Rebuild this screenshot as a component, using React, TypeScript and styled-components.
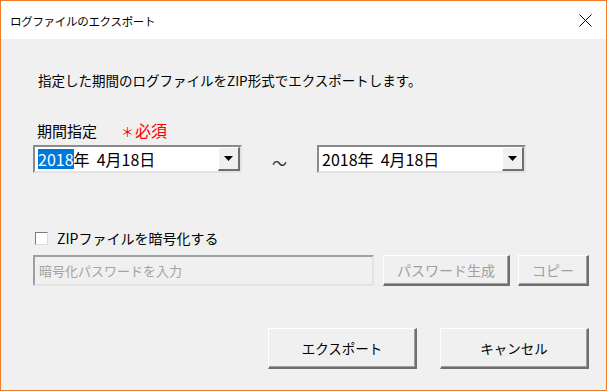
import { FC } from 'react';
import styled, { createGlobalStyle } from 'styled-components';

const GlobalStyle = createGlobalStyle`
  html, body {
    margin: 0;
    padding: 0;
    background: #ffffff;
  }
  body {
    font-family: "Noto Sans CJK JP", "Noto Sans", sans-serif;
    color: #000;
  }
`;

const FONT = `"Noto Sans CJK JP", "Noto Sans", sans-serif`;

type ComboProps = {
  highlight?: boolean;
};

const DateCombo: FC<ComboProps> = ({ highlight = false }) => (
  <SCombo>
    <SComboText>
      {highlight ? <SSelected>2018</SSelected> : '2018'}年&nbsp;&nbsp;4月18日
    </SComboText>
    <SDropButton>
      <svg width="9" height="5" viewBox="0 0 9 5">
        <path d="M0 0 H9 L4.5 5 Z" fill="#000" />
      </svg>
    </SDropButton>
  </SCombo>
);

export default function App() {
  return (
    <>
      <GlobalStyle />
      <SWindow>
        <STitleBar>
          <STitle>ログファイルのエクスポート</STitle>
          <SClose aria-label="close">
            <svg width="13" height="13" viewBox="0 0 13 13">
              <path d="M0.5 0.5 L12.5 12.5 M12.5 0.5 L0.5 12.5" stroke="#000" strokeWidth="1" />
            </svg>
          </SClose>
        </STitleBar>
        <SBody>
          <SDescription>指定した期間のログファイルをZIP形式でエクスポートします。</SDescription>
          <SLabel>
            期間指定
            <SRequired>
              <SAsterisk>＊</SAsterisk>必須
            </SRequired>
          </SLabel>
          <SDateRow>
            <DateCombo highlight />
            <STilde>～</STilde>
            <DateCombo />
          </SDateRow>
          <SCheckRow>
            <SCheckBox />
            <SCheckLabel>ZIPファイルを暗号化する</SCheckLabel>
          </SCheckRow>
          <SPasswordRow>
            <SPasswordInput disabled placeholder="暗号化パスワードを入力" />
            <SButton disabled $width={127}>パスワード生成</SButton>
            <SButton disabled $width={71}>コピー</SButton>
          </SPasswordRow>
          <SFooter>
            <SButton $width={149} $height={41} $size={13.5}>エクスポート</SButton>
            <SButton $width={149} $height={41} $size={13.5}>キャンセル</SButton>
          </SFooter>
        </SBody>
      </SWindow>
    </>
  );
}

const SWindow = styled.div`
  width: 607px;
  height: 391px;
  box-sizing: border-box;
  border: 1px solid #ef7a2a;
  background: #f0f0f0;
  display: flex;
  flex-direction: column;
`;

const STitleBar = styled.div`
  height: 38px;
  background: #ffffff;
  display: flex;
  align-items: center;
  justify-content: space-between;
  padding: 0 14px 0 9px;
  flex-shrink: 0;
`;

const STitle = styled.span`
  font-family: ${FONT};
  font-size: 11.5px;
  line-height: 16px;
  margin-top: 1px;
  letter-spacing: -0.3px;
`;

const SClose = styled.div`
  width: 13px;
  height: 13px;
  display: flex;
  margin-top: 1px;
`;

const SBody = styled.div`
  flex: 1;
  display: flex;
  flex-direction: column;
  padding: 32px 17px 0 32px;
`;

const SDescription = styled.p`
  margin: 0 0 0 5px;
  font-family: ${FONT};
  font-size: 13.5px;
  line-height: 18px;
`;

const SLabel = styled.p`
  margin: 32px 0 0 4px;
  font-family: ${FONT};
  font-size: 15px;
  line-height: 18px;
`;

const SRequired = styled.span`
  color: #ff0000;
  margin-left: 24px;
  font-size: 16px;
`;

const SAsterisk = styled.span`
  display: inline-block;
  width: 14px;
  font-size: 13px;
`;

const SDateRow = styled.div`
  display: flex;
  align-items: center;
  margin-top: 4px;
`;

const SCombo = styled.div`
  width: 209px;
  height: 28px;
  box-sizing: border-box;
  background: #ffffff;
  border-style: solid;
  border-width: 2px;
  border-color: #8a8a8a #e3e3e3 #e3e3e3 #8a8a8a;
  display: flex;
  align-items: stretch;
`;

const SComboText = styled.div`
  flex: 1;
  display: flex;
  align-items: center;
  padding-left: 3px;
  font-family: ${FONT};
  font-size: 16px;
  line-height: 20px;
  white-space: nowrap;
`;

const SSelected = styled.span`
  background: #0078d7;
  color: #ffffff;
`;

const SDropButton = styled.div`
  width: 22px;
  box-sizing: border-box;
  background: #f0f0f0;
  border-style: solid;
  border-width: 1px 2px 2px 1px;
  border-color: #ffffff #6f6f6f #6f6f6f #ffffff;
  display: flex;
  align-items: center;
  justify-content: center;
`;

const STilde = styled.span`
  width: 75px;
  text-align: center;
  font-family: ${FONT};
  font-size: 15px;
  color: #333;
  margin-top: 6px;
`;

const SCheckRow = styled.div`
  display: flex;
  align-items: center;
  margin-top: 56px;
  height: 18px;
`;

const SCheckBox = styled.div`
  width: 13px;
  height: 13px;
  box-sizing: border-box;
  margin-left: 2px;
  background: #ffffff;
  border-style: solid;
  border-width: 1px;
  border-color: #7a7a7a #dcdcdc #dcdcdc #7a7a7a;
`;

const SCheckLabel = styled.span`
  margin-left: 9px;
  font-family: ${FONT};
  font-size: 14px;
  line-height: 18px;
`;

const SPasswordRow = styled.div`
  display: flex;
  align-items: center;
  gap: 8px;
  margin-top: 8px;
`;

const SPasswordInput = styled.input`
  width: 341px;
  height: 31px;
  box-sizing: border-box;
  margin: 0 1px 0 0;
  padding: 0 4px;
  background: #f0f0f0;
  border-style: solid;
  border-width: 2px;
  border-color: #a0a0a0 #e3e3e3 #e3e3e3 #a0a0a0;
  font-family: ${FONT};
  font-size: 13px;
  outline: none;

  &::placeholder {
    color: #a3a3a3;
  }
`;

const SButton = styled.button<{ $width: number; $height?: number; $size?: number }>`
  width: ${(p) => p.$width}px;
  height: ${(p) => p.$height ?? 31}px;
  box-sizing: border-box;
  margin: 0;
  padding: 0;
  background: #f0f0f0;
  border-style: solid;
  border-width: 1px 2px 2px 1px;
  border-color: #ffffff #6f6f6f #6f6f6f #ffffff;
  box-shadow: inset -1px -1px 0 #a0a0a0;
  font-family: ${FONT};
  font-size: ${(p) => p.$size ?? 14}px;
  color: #000;

  &:disabled {
    color: #a0a0a0;
  }
`;

const SFooter = styled.div`
  display: flex;
  justify-content: flex-end;
  gap: 23px;
  margin-top: 42px;
`;
